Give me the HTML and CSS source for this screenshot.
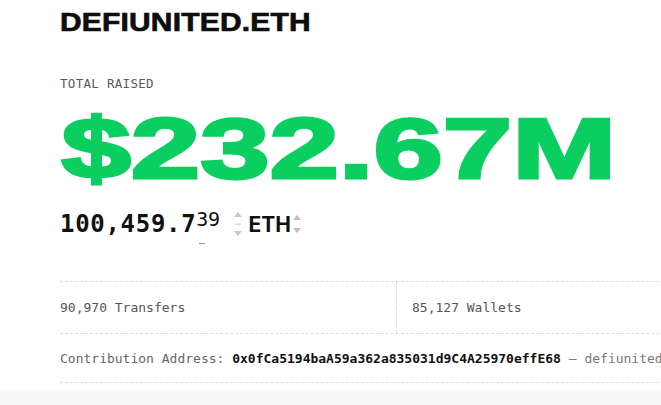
FILE: index.html
```html
<!DOCTYPE html>
<html>
<head>
<meta charset="utf-8">
<link rel="stylesheet" href="styles.css">
</head>
<body>
<div class="page">
  <header class="top">
    <h1 class="title">DEFIUNITED.ETH</h1>
  </header>
  <section class="raised">
    <div class="label">TOTAL RAISED</div>
    <div class="amount">$232.67M</div>
    <div class="eth-row">
      <span class="eth-num">100,459.7<span class="sup">39<span class="tick"></span></span></span>
      <svg class="spin spin-a" width="10" height="30" viewBox="0 0 10 30"><path d="M1 8 L5 3 L9 8 Z" fill="#c8c8c8"/><rect x="2" y="14.5" width="6" height="1.4" fill="#d4d4d4"/><path d="M1 22 L5 27 L9 22 Z" fill="#c8c8c8"/></svg>
      <span class="unit">ETH</span>
      <svg class="spin spin-b" width="10" height="26" viewBox="0 0 10 26"><path d="M1 9 L5 4 L9 9 Z" fill="#bdbdbd"/><path d="M1 17 L5 22 L9 17 Z" fill="#bdbdbd"/></svg>
    </div>
  </section>
  <section class="stats">
    <div class="stat stat-left">90,970 Transfers</div>
    <div class="stat stat-right">85,127 Wallets</div>
  </section>
  <section class="address">
    <span class="addr-label">Contribution Address: </span><span class="addr">0x0fCa5194baA59a362a835031d9C4A25970effE68</span><span class="addr-ens"> — defiunited.eth</span>
  </section>
  <div class="footer-band"></div>
</div>
</body>
</html>
```

FILE: styles.css
```css
html, body {
  margin: 0;
  padding: 0;
  background: #ffffff;
  overflow: hidden;
}

.page {
  width: 900px;
  padding-left: 60px;
  box-sizing: border-box;
}

.title {
  margin: 0;
  padding-top: 7px;
  font-family: "Liberation Sans", Arial, sans-serif;
  font-weight: 700;
  font-size: 26px;
  line-height: 30px;
  color: #0e0e0e;
  -webkit-text-stroke: 0.7px #0e0e0e;
  transform: scaleX(1.15);
  transform-origin: left center;
  letter-spacing: 0.2px;
}

.label {
  margin-top: 39px;
  font-family: "DejaVu Sans Mono", monospace;
  font-size: 12.5px;
  line-height: 16px;
  color: #5a5a5a;
  letter-spacing: 0.3px;
}

.amount {
  margin-top: 11px;
  font-family: "Liberation Sans", Arial, sans-serif;
  font-weight: 700;
  font-size: 86px;
  line-height: 90px;
  color: #0acf60;
  -webkit-text-stroke: 3px #0acf60;
  transform: scaleX(1.45);
  transform-origin: left center;
  letter-spacing: 0;
  padding-left: 1px;
  width: 440px;
}

.eth-row {
  display: flex;
  align-items: center;
  margin-top: 11px;
  height: 40px;
}

.eth-num {
  font-family: "DejaVu Sans Mono", monospace;
  font-weight: 700;
  font-size: 24px;
  letter-spacing: 0.7px;
  color: #111;
  position: relative;
}

.sup {
  position: relative;
  top: -6px;
  font-weight: 400;
  font-size: 20px;
  letter-spacing: -0.5px;
}

.tick {
  position: absolute;
  left: 3px;
  bottom: -13px;
  width: 6px;
  height: 1px;
  background: #999;
}

.spin-a {
  margin-left: 14px;
}

.unit {
  margin-left: 5px;
  font-family: "Inter", "Liberation Sans", sans-serif;
  font-weight: 700;
  font-size: 21px;
  color: #111;
}

.spin-b {
  margin-left: 1px;
}

.stats {
  margin-top: 37px;
  display: flex;
  border-top: 1px dashed #dcdcdc;
  height: 51px;
}

.stat {
  font-family: "DejaVu Sans Mono", monospace;
  font-size: 13px;
  color: #555;
  display: flex;
  align-items: center;
}

.stat-left {
  width: 336px;
  border-right: 1px dashed #dcdcdc;
}

.stat-right {
  padding-left: 15px;
}

.address {
  border-top: 1px dashed #dcdcdc;
  border-bottom: 1px dashed #dcdcdc;
  height: 48px;
  display: flex;
  align-items: center;
  font-family: "DejaVu Sans Mono", monospace;
  font-size: 13px;
  color: #666;
  white-space: pre;
}

.addr {
  font-weight: 700;
  color: #111;
}

.addr-ens {
  color: #777;
}

.footer-band {
  height: 40px;
  background: #f8f8f8;
  margin-top: 6px;
  margin-left: -60px;
}
```
